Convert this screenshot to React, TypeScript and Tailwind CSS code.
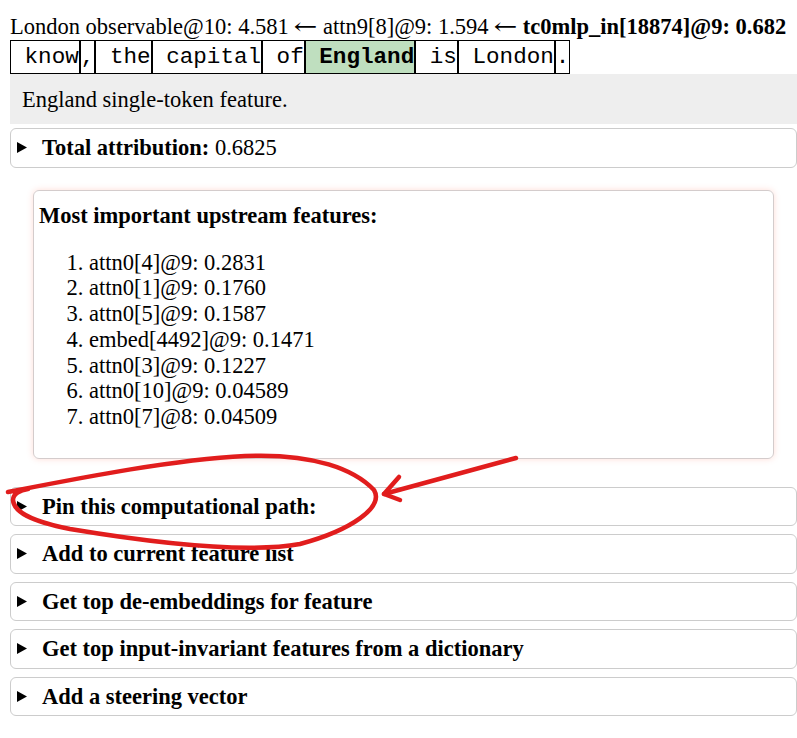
const tokens = [
  { t: "\u00a0know" },
  { t: "," },
  { t: "\u00a0the" },
  { t: "\u00a0capital" },
  { t: "\u00a0of" },
  { t: "\u00a0England", active: true },
  { t: "\u00a0is" },
  { t: "\u00a0London" },
  { t: "." },
];

const upstream = [
  "attn0[4]@9: 0.2831",
  "attn0[1]@9: 0.1760",
  "attn0[5]@9: 0.1587",
  "embed[4492]@9: 0.1471",
  "attn0[3]@9: 0.1227",
  "attn0[10]@9: 0.04589",
  "attn0[7]@8: 0.04509",
];

const actions = [
  "Pin this computational path:",
  "Add to current feature list",
  "Get top de-embeddings for feature",
  "Get top input-invariant features from a dictionary",
  "Add a steering vector",
];

const Triangle = () => (
  <svg width="10" height="11" viewBox="0 0 10 11" className="shrink-0">
    <polygon points="0,0 10,5.5 0,11" fill="#000" />
  </svg>
);

const Summary = ({ children }: { children: React.ReactNode }) => (
  <div className="h-[39.5px] border border-[#cccccc] rounded-[6px] flex items-center pl-[6px] gap-[15px]">
    <Triangle />
    <div className="whitespace-nowrap">{children}</div>
  </div>
);

const Arrow = () => <span className="font-['DejaVu_Serif',serif] font-normal inline-block scale-x-[1.25] mx-[2px]">←</span>;

export default function App() {
  return (
    <div className="relative w-[797px] h-[738px] overflow-hidden bg-white text-black font-['Liberation_Serif',serif] text-[22.5px] leading-[25px]">
      <div className="pl-[10px] pt-[14px]">
        <div className="whitespace-nowrap h-[25px]">
          London observable@10: 4.581 <Arrow /> attn9[8]@9: 1.594 <Arrow /> <b>tc0mlp_in[18874]@9: 0.682</b>
        </div>

        <div className="flex mt-[1px]">
          {tokens.map((tok, i) => (
            <span
              key={i}
              className={
                tok.active
                  ? "border border-black h-[34px] leading-[32px] font-['Liberation_Mono',monospace] text-[22.6px] whitespace-pre font-bold bg-[#bfdfbf]"
                  : "border border-black h-[34px] leading-[32px] font-['Liberation_Mono',monospace] text-[22.6px] whitespace-pre"
              }
            >
              {tok.t}
            </span>
          ))}
        </div>

        <div className="bg-[#eeeeee] h-[50px] flex items-center pl-[12px]">England single-token feature.</div>

        <div className="mt-[4px]">
          <Summary>
            <b>Total attribution:</b> 0.6825
          </Summary>
        </div>

        <div className="mt-[22px] ml-[23px] mr-[23px] h-[269px] border border-[#d4cccc] rounded-[6px] shadow-[0_0_6px_rgba(255,140,120,0.3)] pl-[5px] pt-[12px]">
          <div className="font-bold">Most important upstream features:</div>
          <ol className="list-decimal pl-[50px] mt-[22px] leading-[25.8px]">
            {upstream.map((u) => (
              <li key={u}>{u}</li>
            ))}
          </ol>
        </div>

        <div className="mt-[28px] flex flex-col gap-[8px] font-bold">
          {actions.map((a) => (
            <Summary key={a}>{a}</Summary>
          ))}
        </div>
      </div>

      <svg className="absolute top-0 left-0 pointer-events-none" width="797" height="738" viewBox="0 0 797 738">
        <path
          d="M8 492 C 80 478, 170 460, 245 456 C 315 453, 355 470, 374 490 C 384 507, 352 530, 300 544 C 250 553, 160 544, 70 529 C 30 521, 14 512, 13 500 C 13 494, 20 490, 28 489"
          fill="none"
          stroke="#e11d1d"
          strokeWidth="4.5"
          strokeLinecap="round"
        />
        <path d="M516 458 L 384 494" fill="none" stroke="#e11d1d" strokeWidth="4.5" strokeLinecap="round" />
        <path d="M399 477 L 384 494 L 400 500" fill="none" stroke="#e11d1d" strokeWidth="4.5" strokeLinecap="round" strokeLinejoin="round" />
      </svg>
    </div>
  );
}
